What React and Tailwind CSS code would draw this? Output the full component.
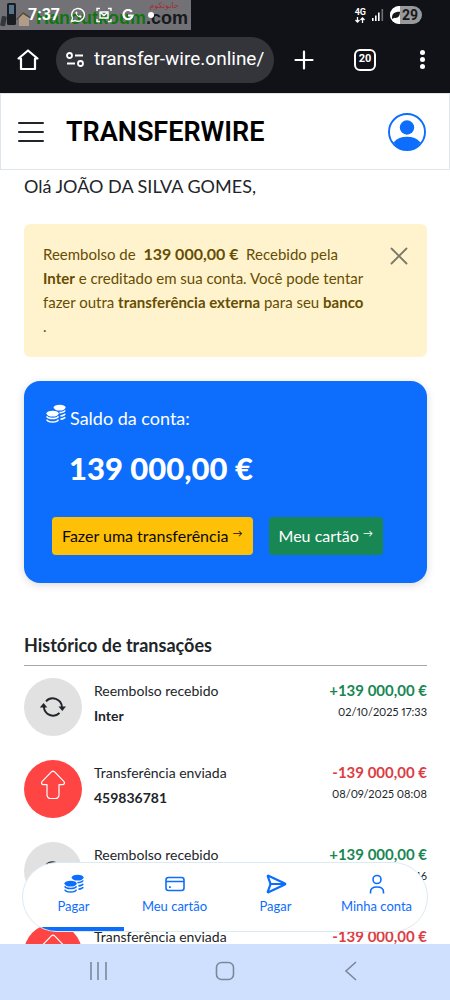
import React from 'react';
import { SendHorizontal } from 'lucide-react';

const transactions = [
  { id: 1, type: 'refund', title: 'Reembolso recebido', detail: 'Inter', amount: '+139 000,00 €', date: '02/10/2025 17:33' },
  { id: 2, type: 'sent', title: 'Transferência enviada', detail: '459836781', amount: '-139 000,00 €', date: '08/09/2025 08:08' },
  { id: 3, type: 'refund', title: 'Reembolso recebido', detail: 'Inter', amount: '+139 000,00 €', date: '08/09/2025 07:46' },
  { id: 4, type: 'sent', title: 'Transferência enviada', detail: '459836781', amount: '-139 000,00 €', date: '05/09/2025 10:12' },
];

// --- ICONS ---
const Coins = ({ className }) => (
  <svg viewBox="0 0 20 20" className={className} fill="currentColor" aria-hidden="true">
    <ellipse cx="13.6" cy="3.6" rx="6" ry="2.9" />
    <ellipse cx="6.6" cy="9.6" rx="6.2" ry="2.9" />
    <g fill="none" stroke="currentColor" strokeWidth="1.6">
      <path d="M19 6.400c-.3 1.300-1.800 2-5.500 2.200" />
      <path d="M19 9.700c-.3 1.300-1.600 1.900-4.600 2.200" />
      <path d="M19 13c-.3 1.300-1.600 1.900-4.600 2.200" />
      <path d="M.8 12.300c.9 3 10.700 3 11.600 0" />
      <path d="M.8 15.600c.9 3.200 10.700 3.200 11.600 0" />
    </g>
  </svg>
);

const RefreshIcon = () => (
  <svg viewBox="0 0 28 24" className="h-6 w-7" fill="none" stroke="currentColor" strokeWidth="1.900">
    <path d="M7 6.300A9.200 9.200 0 0 1 22.900 12M20.500 18A9.200 9.200 0 0 1 4.900 12" />
    <path d="M19.500 11.500h7.500L23.300 16zM.8 12.500h7.500L4.600 8z" fill="currentColor" stroke="none" />
  </svg>
);

const ArrowUpIcon = () => (
  <svg viewBox="0 0 26 30" className="mb-2 h-[30px] w-[26px]" fill="none" stroke="currentColor" strokeWidth="1.200" strokeLinejoin="round">
    <path d="M11.600 1.700a2 2 0 0 1 2.800 0l9.400 9.700c1.200 1.300.7 3.300-1.300 3.300H19V25a3.500 3.500 0 0 1-3.500 3.500h-5A3.500 3.500 0 0 1 7 25V14.700H3.500c-2 0-2.500-2-1.300-3.300z" />
  </svg>
);

const CardIcon = () => (
  <svg viewBox="0 0 20 16" className="h-4 w-5" fill="none" stroke="currentColor" strokeWidth="1.600">
    <rect x="1" y="1.500" width="18" height="13" rx="2.500" />
    <path d="M1 5.500h18" />
    <path d="M4 11.200h1.800" strokeWidth="1.800" />
  </svg>
);

const PersonIcon = () => (
  <svg viewBox="0 0 16 20" className="h-5 w-4" fill="none" stroke="currentColor" strokeWidth="1.600">
    <circle cx="8" cy="5.500" r="4" />
    <path d="M1.500 19.500v-1.500c0-3 2.500-5 6.500-5s6.500 2 6.500 5v1.500" />
  </svg>
);

const StatusBar = () => (
  <div className="relative h-[30px] text-white">
    {/* watermark behind the clock */}
    <div className="absolute left-0 top-0 flex h-[30px] w-[191px] items-end bg-[#727276]">
      <svg viewBox="0 0 32 26" className="mb-0.5 h-[26px] w-8 shrink-0">
        <rect x="1" y="14" width="5" height="10" rx="1" fill="#33363a" transform="rotate(12 3 19)" />
        <rect x="7" y="1" width="9" height="22" rx="1.500" fill="#191d22" />
        <rect x="9" y="3" width="5" height="9" fill="#52758d" />
        <path d="M17 16l6-6 8 6-2 1v7H19v-7z" fill="#b19d87" />
        <path d="M16 17l7-7 9 6-1 1-8-5-6 6z" fill="#544538" />
      </svg>
      <span className="ml-1 font-['Liberation_Sans',sans-serif] text-lg font-bold leading-6 text-[#0e760e]">
        Hanoutkoum<span className="text-[#18191c]">.com</span>
      </span>
      <span dir="rtl" className="absolute right-3 top-0 font-['DejaVu_Sans',sans-serif] text-[8px] leading-3 text-[#a32e35]">حانوتكوم</span>
    </div>

    <div className="relative flex h-full items-center justify-between px-7">
      <div className="flex items-center gap-2.5">
        <span className="font-['Roboto',sans-serif] text-base font-bold">7:37</span>
        <svg viewBox="0 0 16 16" className="h-4 w-4" fill="none" stroke="currentColor" strokeWidth="1.400">
          <path d="M1.500 14.500l1-3.400a6.400 6.400 0 1 1 2.500 2.400z" />
          <path d="M5.300 5c.3 3 2.400 5.200 5.600 5.700l.6-1.600-1.700-.9-.9.8c-1-.5-1.600-1.200-2-2l.7-.9-.8-1.700z" fill="currentColor" stroke="none" />
        </svg>
        <svg viewBox="0 0 16 16" className="h-4 w-4" fill="none" stroke="currentColor" strokeWidth="1.400">
          <path d="M1 4V1.500h3M12 1.500h3V4M15 12v2.500h-3M4 14.500H1V12" />
          <path d="M4 5h8v6H4zM5 6l3 2.500L11 6" />
        </svg>
        <svg viewBox="0 0 12 12" className="h-3 w-3" fill="none" stroke="currentColor" strokeWidth="2.200">
          <path d="M9.800 2.800A4.600 4.600 0 1 0 10.600 6.500H6" />
        </svg>
        <span className="ml-1 h-1.5 w-1.5 rounded-full bg-white" />
      </div>
      <div className="flex items-center gap-1.5">
        <div className="flex flex-col items-center">
          <span className="font-['Roboto',sans-serif] text-[9px] font-bold leading-[9px]">4G</span>
          <svg viewBox="0 0 10 6" className="h-1.5 w-2.5" fill="none" stroke="currentColor" strokeWidth="1.300">
            <path d="M2.500 0v5M.5 3l2 2 2-2M7.500 6V1M5.500 3l2-2 2 2" />
          </svg>
        </div>
        <svg viewBox="0 0 12 12" className="h-3 w-3" fill="currentColor">
          <rect x="0" y="9" width="1.600" height="3" />
          <rect x="3" y="6.500" width="1.600" height="5.500" />
          <rect x="6" y="3.500" width="1.600" height="8.500" />
          <rect x="9.500" y="0" width="1.600" height="12" opacity=".4" />
        </svg>
        <div className="flex h-[18px] w-8 items-center overflow-hidden rounded-full bg-[#98999b] text-[#17181d]">
          <span className="flex h-full w-2.5 items-center bg-white">
            <svg viewBox="0 0 10 10" className="ml-0.5 h-2 w-2 shrink-0" fill="currentColor">
              <path d="M0 9C0 4 2 1 10 1c0 6-3 8.500-7.500 7.500L1 10z" />
            </svg>
          </span>
          <span className="ml-0.5 font-['Roboto',sans-serif] text-sm font-bold">29</span>
        </div>
      </div>
    </div>
  </div>
);

const BrowserBar = () => (
  <div className="flex h-[63px] items-center pb-1 pl-4 pr-3.5 text-white">
    <button aria-label="Início" className="flex w-6 justify-center">
      <svg viewBox="0 0 22 22" className="h-[22px] w-[22px]" fill="none" stroke="currentColor" strokeWidth="2.200" strokeLinejoin="round" strokeLinecap="round">
        <path d="M4 9.500H1.500L11 1.500l9.500 8H18V20H4z" />
      </svg>
    </button>
    <div className="ml-4 flex h-[46px] min-w-0 flex-1 items-center rounded-full bg-[#34353b] px-2.5">
      <svg viewBox="0 0 18 15" className="h-[15px] w-[18px] shrink-0" fill="none" stroke="currentColor" strokeWidth="1.800">
        <circle cx="3.500" cy="3.500" r="2.500" />
        <path d="M9 3.500h8M1 11.500h8" />
        <circle cx="14.500" cy="11.500" r="2.500" />
      </svg>
      <input
        aria-label="Endereço"
        readOnly
        value="transfer-wire.online/"
        className="ml-2.5 w-full min-w-0 bg-transparent font-['Roboto',sans-serif] text-[19px] outline-none"
      />
    </div>
    <button aria-label="Nova aba" className="ml-5">
      <svg viewBox="0 0 20 20" className="h-5 w-5" stroke="currentColor" strokeWidth="2.200" strokeLinecap="round">
        <path d="M10 1.500v17M1.500 10h17" />
      </svg>
    </button>
    <button aria-label="Abas" className="ml-10 flex h-[22px] w-[22px] items-center justify-center rounded-md border-2 border-white font-['Roboto',sans-serif] text-[11px] font-bold">
      20
    </button>
    <button aria-label="Mais" className="ml-9 mr-1 flex w-5 flex-col items-center gap-0.5">
      <span className="h-[5px] w-[5px] rounded-full bg-white" />
      <span className="h-[5px] w-[5px] rounded-full bg-white" />
      <span className="h-[5px] w-[5px] rounded-full bg-white" />
    </button>
  </div>
);

const SiteHeader = () => (
  <header className="flex h-[77px] shrink-0 items-center justify-between border border-[#dee6ec] bg-white pl-4 pr-[23px]">
    <div className="flex items-center">
      <button aria-label="Menu">
        <svg viewBox="0 0 28 24" className="h-6 w-7" stroke="#212529" strokeWidth="2" strokeLinecap="round">
          <path d="M2 3h24M2 12h24M2 21h24" />
        </svg>
      </button>
      <span className="ml-[21px] font-['Roboto',sans-serif] text-[27px] font-semibold leading-8 text-black">TRANSFERWIRE</span>
    </div>
    <button aria-label="Perfil">
      <svg viewBox="0 0 38 38" className="h-[38px] w-[38px]">
        <circle cx="19" cy="19" r="18" fill="none" stroke="#0d6efd" strokeWidth="1.900" />
        <circle cx="19" cy="14.500" r="7.200" fill="#0d6efd" />
        <path d="M5.500 29.500C9 25.500 13.500 23.800 19 23.800s10 1.700 13.500 5.700A18 18 0 0 1 19 37.500 18 18 0 0 1 5.500 29.500z" fill="#0d6efd" />
      </svg>
    </button>
  </header>
);

const TransactionRow = ({ item }) => {
  const sent = item.type === 'sent';
  return (
    <li className="flex h-[82px] items-start">
      <div className={`flex h-[58px] w-[58px] shrink-0 items-center justify-center rounded-full ${sent ? 'bg-[#ff4444] text-white' : 'bg-[#e1e1e1] text-[#212529]'}`}>
        {sent ? <ArrowUpIcon /> : <RefreshIcon />}
      </div>
      <div className="ml-3 min-w-0 flex-1 text-sm leading-[25px]">
        <p className="leading-[25px]">{item.title}</p>
        <p className="font-bold leading-[25px]">{item.detail}</p>
      </div>
      <div className="text-right">
        <p className={`text-[15px] font-bold leading-[25px] ${sent ? 'text-[#dc3d43]' : 'text-[#198754]'}`}>{item.amount}</p>
        <p className="text-[11px] leading-[18px] proportional-nums">{item.date}</p>
      </div>
    </li>
  );
};

const tabs = [
  { label: 'Pagar', icon: <Coins className="h-5 w-5" />, active: true },
  { label: 'Meu cartão', icon: <CardIcon /> },
  { label: 'Pagar', icon: <SendHorizontal size={22} strokeWidth={2.4} /> },
  { label: 'Minha conta', icon: <PersonIcon /> },
];

const TabBar = () => (
  <nav className="absolute inset-x-[22px] bottom-3 flex h-[70px] overflow-hidden rounded-full border border-[#dceaf2] bg-white">
    {tabs.map((tab, i) => (
      <a
        key={i}
        href="#"
        className={`flex flex-1 flex-col items-center border-b-4 pt-[9px] text-[#0d6efd] ${tab.active ? 'border-[#0d6efd]' : 'border-transparent'}`}
      >
        <span className="flex h-6 items-center">{tab.icon}</span>
        <span className="text-[13px] leading-5">{tab.label}</span>
      </a>
    ))}
  </nav>
);

const SystemBar = () => (
  <div className="flex h-14 shrink-0 items-center justify-between bg-[#cfe0fe] px-[88px] pb-0.5 text-[#7c879b]">
    <button aria-label="Recentes">
      <svg viewBox="0 0 20 18" className="h-[18px] w-5" stroke="currentColor" strokeWidth="1.600">
        <path d="M3 0v18M10 0v18M18 0v18" />
      </svg>
    </button>
    <button aria-label="Tela inicial">
      <svg viewBox="0 0 20 20" className="h-5 w-5" fill="none" stroke="currentColor" strokeWidth="1.600">
        <rect x="1.500" y="1.500" width="17" height="17" rx="5" />
      </svg>
    </button>
    <button aria-label="Voltar">
      <svg viewBox="0 0 20 20" className="h-5 w-5" fill="none" stroke="currentColor" strokeWidth="1.600">
        <path d="M14 1L4 10l10 9" />
      </svg>
    </button>
  </div>
);

export default function App() {
  return (
    <div className="flex h-screen flex-col bg-white font-['Lato',sans-serif] text-[#212529]">
      <div className="shrink-0 bg-[#111218]">
        <StatusBar />
        <BrowserBar />
      </div>
      <SiteHeader />

      <div className="relative min-h-0 flex-1">
        <main className="h-full overflow-hidden pl-6 pr-[23px] pt-1">
          <h1 className="text-lg leading-6">Olá JOÃO DA SILVA GOMES,</h1>

          <div role="alert" className="mt-[26px] flex items-start rounded-md bg-[#fff3cd] pb-[19px] pl-[19px] pr-[18px] pt-[18px] text-[#664d03]">
            <p className="flex-1 text-[15px] leading-6">
              Reembolso de &nbsp;<b className="text-base leading-6">139 000,00 €</b>&nbsp; Recebido pela<br />
              <b>Inter</b> e creditado em sua conta. Você pode tentar<br />
              fazer outra <b>transferência externa</b> para seu <b>banco</b>
              <br />.
            </p>
            <button aria-label="Fechar" className="mt-1">
              <svg viewBox="0 0 20 20" className="h-5 w-5" stroke="#7c776a" strokeWidth="1.800" strokeLinecap="round">
                <path d="M2.500 2.500l15 15M17.500 2.500l-15 15" />
              </svg>
            </button>
          </div>

          <section className="mt-6 rounded-2xl bg-[#0d6efd] px-[22px] pb-7 pt-[23px] text-white shadow-[0_2px_8px_rgba(0,0,0,0.15)]">
            <h2 className="flex items-start gap-1 text-lg leading-7">
              <Coins className="h-5 w-5" />
              Saldo da conta:
            </h2>
            <p className="mt-[18px] pl-[23px] text-[31px] font-black leading-9">139 000,00 €</p>
            <div className="mt-[31px] flex gap-4 pl-1.5">
              <button className="h-[38px] whitespace-nowrap rounded bg-[#ffc107] px-2.5 text-base text-[#0c0a05]">
                Fazer uma transferência <sup className="text-[10px]">→</sup>
              </button>
              <button className="h-[38px] whitespace-nowrap rounded bg-[#198754] px-2.5 text-base">
                Meu cartão <sup className="text-[10px]">→</sup>
              </button>
            </div>
          </section>

          <section className="mt-[50px]">
            <h2 className="border-b border-[#a5a7a9] pb-2 text-lg font-bold leading-6">Histórico de transações</h2>
            <ul className="pt-3">
              {transactions.map((item) => (
                <TransactionRow key={item.id} item={item} />
              ))}
            </ul>
          </section>
        </main>
        <TabBar />
      </div>

      <SystemBar />
    </div>
  );
}
